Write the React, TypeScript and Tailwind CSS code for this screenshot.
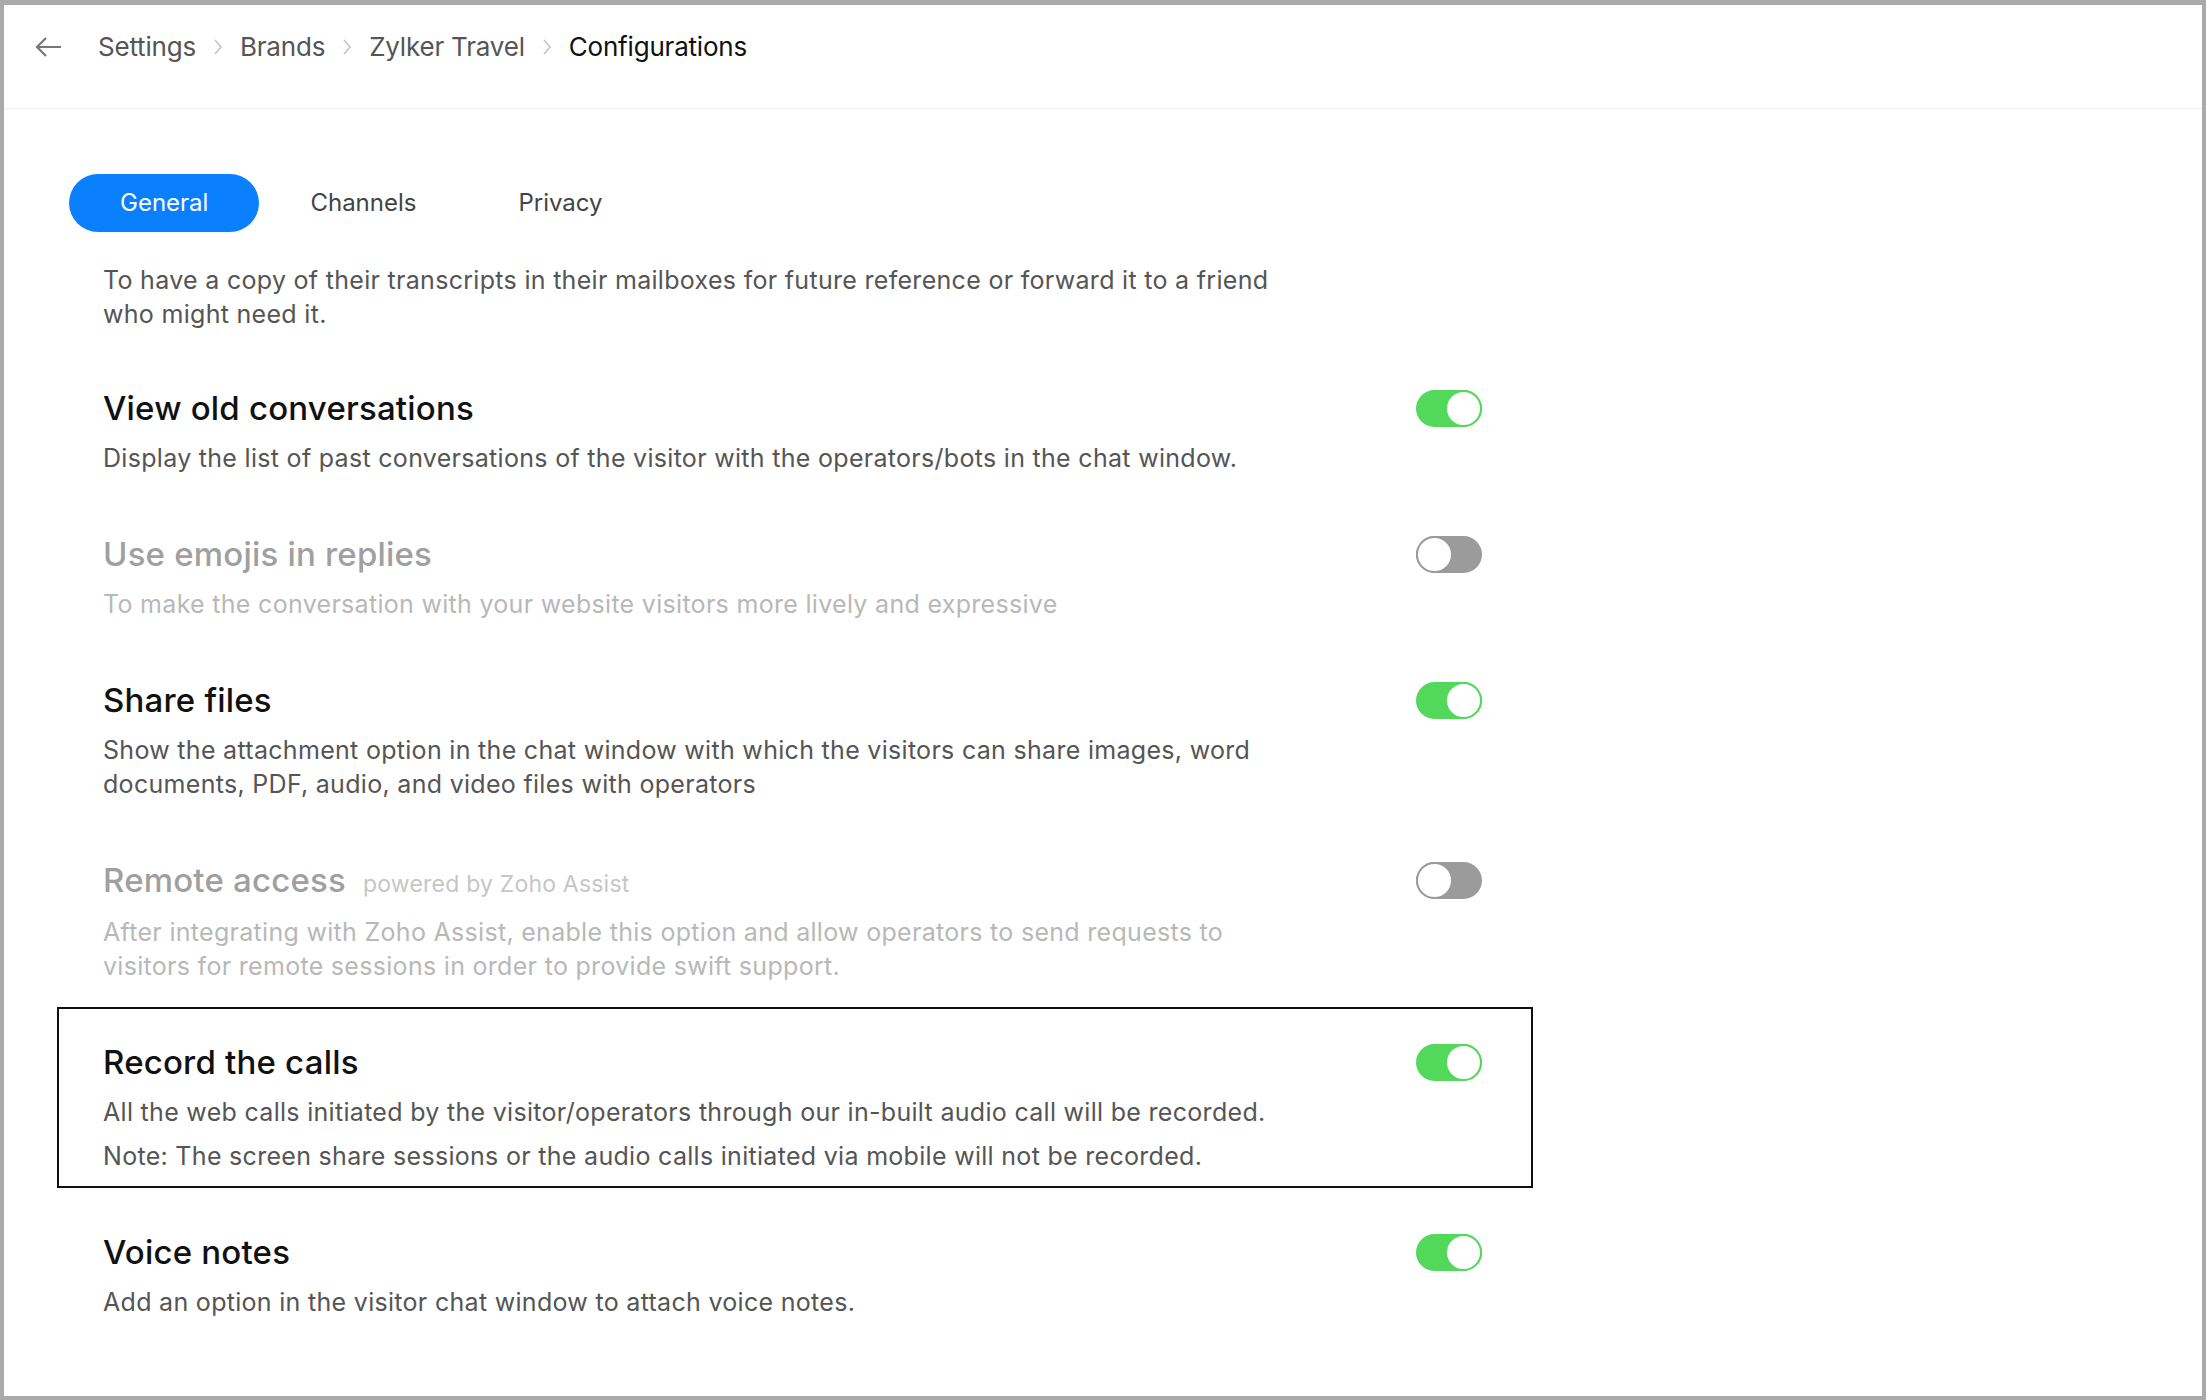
import { useState } from "react";

type Item = {
  id: string;
  title: string;
  tag?: string;
  lines: string[];
  on: boolean;
  muted?: boolean;
  boxed?: boolean;
};

const items: Item[] = [
  {
    id: "old",
    title: "View old conversations",
    lines: ["Display the list of past conversations of the visitor with the operators/bots in the chat window."],
    on: true,
  },
  {
    id: "emoji",
    title: "Use emojis in replies",
    lines: ["To make the conversation with your website visitors more lively and expressive"],
    on: false,
    muted: true,
  },
  {
    id: "files",
    title: "Share files",
    lines: [
      "Show the attachment option in the chat window with which the visitors can share images, word documents, PDF, audio, and video files with operators",
    ],
    on: true,
  },
  {
    id: "remote",
    title: "Remote access",
    tag: "powered by Zoho Assist",
    lines: [
      "After integrating with Zoho Assist, enable this option and allow operators to send requests to visitors for remote sessions in order to provide swift support.",
    ],
    on: false,
    muted: true,
  },
  {
    id: "calls",
    title: "Record the calls",
    lines: [
      "All the web calls initiated by the visitor/operators through our in-built audio call will be recorded.",
      "Note: The screen share sessions or the audio calls initiated via mobile will not be recorded.",
    ],
    on: true,
    boxed: true,
  },
  {
    id: "voice",
    title: "Voice notes",
    lines: ["Add an option in the visitor chat window to attach voice notes."],
    on: true,
  },
];

function Chevron() {
  return (
    <svg width="10" height="18" viewBox="0 0 10 18" fill="none">
      <path d="M2 2l6 7-6 7" stroke="#c2c2c2" strokeWidth="1.5" />
    </svg>
  );
}

function Toggle({ on, onClick }: { on: boolean; onClick: () => void }) {
  return (
    <button
      type="button"
      onClick={onClick}
      className={`relative mt-[2px] h-[37px] w-[66px] shrink-0 rounded-full ${
        on ? "bg-[#52d95b]" : "bg-[#9b9b9b]"
      }`}
    >
      <span
        className={`absolute top-0 h-[37px] w-[37px] rounded-full border-2 bg-white ${
          on ? "right-0 border-[#52d95b]" : "left-0 border-[#9b9b9b]"
        }`}
      />
    </button>
  );
}

export default function App() {
  const [tab, setTab] = useState("General");
  const [state, setState] = useState<Record<string, boolean>>(
    Object.fromEntries(items.map((i) => [i.id, i.on]))
  );

  return (
    <div
      className="box-border h-[1400px] w-[2206px] border-4 border-t-[5px] border-[#aaaaaa] bg-white"
      style={{ fontFamily: "Inter, 'Noto Sans', sans-serif" }}
    >
      <header className="flex h-[104px] items-start gap-[17px] border-b border-[#efefef] pl-[31px] pt-[22px] text-[26px] leading-[40px] tracking-[-0.2px] text-[#555]">
        <svg width="28" height="40" viewBox="0 0 28 40" fill="none" className="mr-[18px]">
          <path d="M2 20h24M11 11l-9 9 9 9" stroke="#777" strokeWidth="2.2" />
        </svg>
        <span>Settings</span>
        <span className="flex h-[40px] items-center"><Chevron /></span>
        <span>Brands</span>
        <span className="flex h-[40px] items-center"><Chevron /></span>
        <span>Zylker Travel</span>
        <span className="flex h-[40px] items-center"><Chevron /></span>
        <span className="text-[#111]">Configurations</span>
      </header>

      <div className="ml-[53px] w-[1476px] pt-[65px]">
        <div className="flex">
          {["General", "Channels", "Privacy"].map((t) => (
            <button
              key={t}
              type="button"
              onClick={() => setTab(t)}
              className={`h-[58px] rounded-full px-[51px] text-[24px] ${
                tab === t ? "bg-[#0a80ff] text-white" : "text-[#444]"
              } ${t === "General" ? "ml-[12px]" : ""}`}
            >
              {t}
            </button>
          ))}
        </div>

        <p className="mt-[31px] max-w-[1231px] pl-[46px] text-[25px] leading-[34px] tracking-[0.3px] text-[#555]">
          To have a copy of their transcripts in their mailboxes for future reference or forward it to a friend who might need it.
        </p>

        <div className="mt-[22px] flex flex-col gap-[9px]">
          {items.map((item) => (
            <div
              key={item.id}
              className={`flex items-start justify-between border-2 pb-[13px] pl-[44px] pr-[49px] pt-[33px] ${
                item.boxed ? "border-[#111]" : "border-transparent"
              }`}
            >
              <div className="max-w-[1185px]">
                <div className="flex items-baseline gap-[17px]">
                  <h3
                    className={`text-[33px] leading-[40px] font-medium tracking-[0.2px] ${
                      item.muted ? "text-[#a0a0a0]" : "text-[#111]"
                    }`}
                  >
                    {item.title}
                  </h3>
                  {item.tag && (
                    <span className="text-[23px] tracking-[0.2px] text-[#c6c6c6]">{item.tag}</span>
                  )}
                </div>
                <div className="mt-[13px] flex flex-col gap-[10px]">
                  {item.lines.map((l) => (
                    <p
                      key={l}
                      className={`text-[25px] leading-[34px] tracking-[0.3px] ${
                        item.muted ? "text-[#b8b8b8]" : "text-[#555]"
                      }`}
                    >
                      {l}
                    </p>
                  ))}
                </div>
              </div>
              <Toggle
                on={state[item.id]}
                onClick={() => setState((s) => ({ ...s, [item.id]: !s[item.id] }))}
              />
            </div>
          ))}
        </div>
      </div>
    </div>
  );
}
